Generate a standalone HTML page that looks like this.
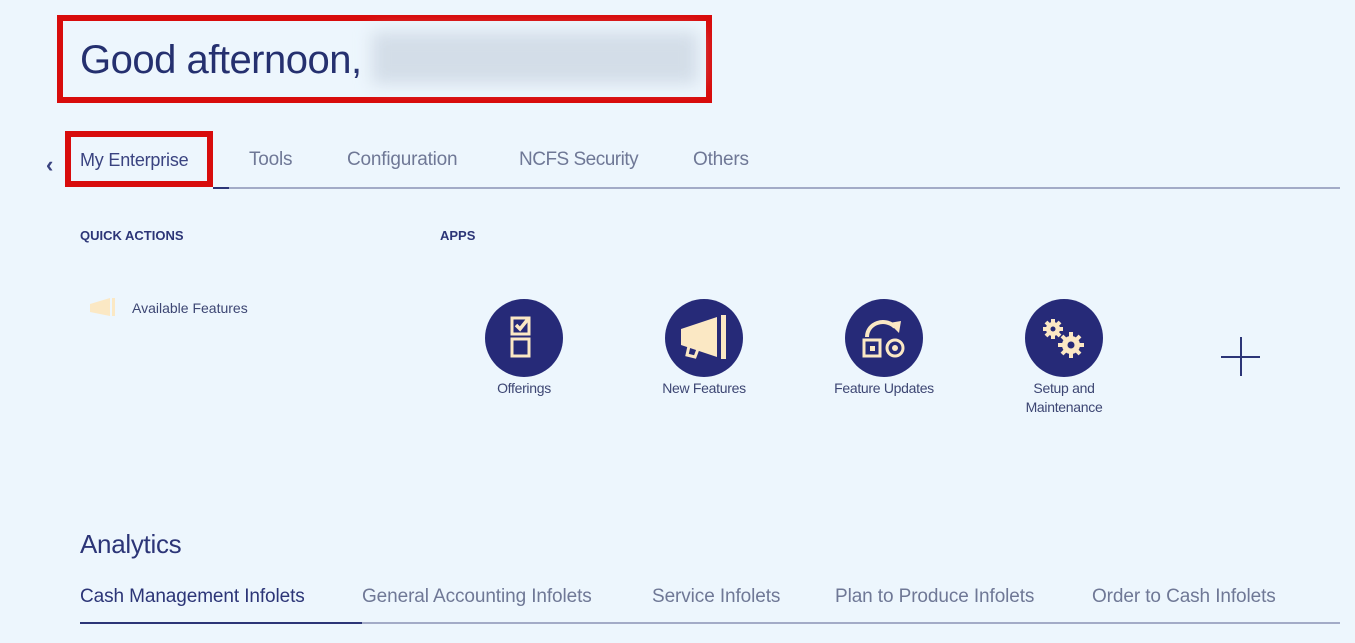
<!DOCTYPE html>
<html><head><style>
body{margin:0;width:1355px;height:643px;background:#edf6fd;font-family:"Liberation Sans",sans-serif;position:relative;overflow:hidden;color:#2c3577}
.a{position:absolute}
.t{position:absolute;font-size:19px;color:#6f7896;top:149px;letter-spacing:-0.2px}
.b{position:absolute;font-size:19px;color:#6f7896;top:586px;letter-spacing:-0.1px}
.c{position:absolute;width:78px;height:78px;border-radius:50%;background:#262a78;top:299px}
.l{position:absolute;font-size:14px;color:#3d4673;text-align:center;width:160px;top:379px;line-height:19px;letter-spacing:-0.3px}
</style></head><body>
<div class="a" style="left:57px;top:15px;width:643px;height:76px;border:6px solid #d80c0c"></div>
<div class="a" style="left:80px;top:38px;font-size:40px;color:#25306f;letter-spacing:-0.5px">Good afternoon,</div>
<div class="a" style="left:372px;top:32px;width:326px;height:52px;background:#d3dde8;filter:blur(8px)"></div>
<div class="a" style="left:46px;top:152px;font-size:22px;color:#3a4380;font-weight:bold">‹</div>
<div class="a" style="left:65px;top:131px;width:136px;height:44px;border:6px solid #d80c0c"></div>
<div class="t" style="left:80px;color:#3a4380;font-size:18px;top:150px">My Enterprise</div>
<div class="t" style="left:249px">Tools</div>
<div class="t" style="left:347px">Configuration</div>
<div class="t" style="left:519px;letter-spacing:-0.5px">NCFS Security</div>
<div class="t" style="left:693px">Others</div>
<div class="a" style="left:213px;top:187px;width:1127px;height:2px;background:#a3abc7"></div>
<div class="a" style="left:213px;top:187px;width:16px;height:2px;background:#2c3577"></div>
<div class="a" style="left:80px;top:228px;font-size:13px;font-weight:bold;color:#2c3577">QUICK ACTIONS</div>
<div class="a" style="left:440px;top:228px;font-size:13px;font-weight:bold;color:#2c3577">APPS</div>
<svg class="a" style="left:88px;top:296px" width="32" height="24"><path d="M2 8 L22 2 L22 20 L2 16 Z" fill="#fbe8c4"/><rect x="24" y="2" width="3" height="18" fill="#fbe8c4"/></svg>
<div class="a" style="left:132px;top:300px;font-size:14px;color:#3d4673">Available Features</div>
<div class="c" style="left:485px"></div>
<svg class="a" style="left:485px;top:299px" width="78" height="78"><g fill="none" stroke="#fbe8c4" stroke-width="3"><rect x="27" y="19" width="17" height="16"/><rect x="27" y="40" width="17" height="17"/></g><path d="M31 26 l4 4 l8 -10" stroke="#fbe8c4" stroke-width="3.5" fill="none"/></svg>
<div class="l" style="left:444px">Offerings</div>
<div class="c" style="left:665px"></div>
<svg class="a" style="left:665px;top:299px" width="78" height="78"><path d="M16 30 L52 18 L52 58 L16 46 Z" fill="#fbe8c4"/><rect x="56" y="16" width="5" height="44" fill="#fbe8c4"/><path d="M24 47 L22 56 L30 58 L33 50" stroke="#fbe8c4" stroke-width="3" fill="none"/></svg>
<div class="l" style="left:624px">New Features</div>
<div class="c" style="left:845px"></div>
<svg class="a" style="left:845px;top:299px" width="78" height="78"><path d="M22 38 C22 24 40 18 50 28" stroke="#fbe8c4" stroke-width="4" fill="none"/><path d="M44 24 L56 22 L54 34 Z" fill="#fbe8c4"/><rect x="19" y="41" width="16" height="16" fill="none" stroke="#fbe8c4" stroke-width="3"/><rect x="25" y="47" width="5" height="5" fill="#fbe8c4"/><circle cx="50" cy="49" r="8" fill="none" stroke="#fbe8c4" stroke-width="3"/><circle cx="50" cy="49" r="3" fill="#fbe8c4"/></svg>
<div class="l" style="left:804px">Feature Updates</div>
<div class="c" style="left:1025px"></div>
<svg class="a" style="left:1025px;top:299px" width="78" height="78"><g fill="#fbe8c4"><circle cx="28" cy="30" r="7"/><circle cx="46" cy="46" r="9"/></g><g stroke="#fbe8c4" stroke-width="4"><path d="M28 20v20M18 30h20M21 23l14 14M35 23l-14 14"/><path d="M46 33v26M33 46h26M37 37l18 18M55 37l-18 18"/></g><circle cx="28" cy="30" r="2.5" fill="#262a78"/><circle cx="46" cy="46" r="3.5" fill="#262a78"/></svg>
<div class="l" style="left:984px">Setup and<br>Maintenance</div>
<div class="a" style="left:1221px;top:356px;width:39px;height:2px;background:#2c3577"></div>
<div class="a" style="left:1240px;top:337px;width:2px;height:39px;background:#2c3577"></div>
<div class="a" style="left:80px;top:529px;font-size:26px;color:#2c3577;letter-spacing:-0.3px">Analytics</div>
<div class="b" style="left:80px;color:#2c3577">Cash Management Infolets</div>
<div class="b" style="left:362px">General Accounting Infolets</div>
<div class="b" style="left:652px">Service Infolets</div>
<div class="b" style="left:835px">Plan to Produce Infolets</div>
<div class="b" style="left:1092px">Order to Cash Infolets</div>
<div class="a" style="left:80px;top:622px;width:1260px;height:2px;background:#a3abc7"></div>
<div class="a" style="left:80px;top:622px;width:282px;height:2px;background:#2c3577"></div>
</body></html>
